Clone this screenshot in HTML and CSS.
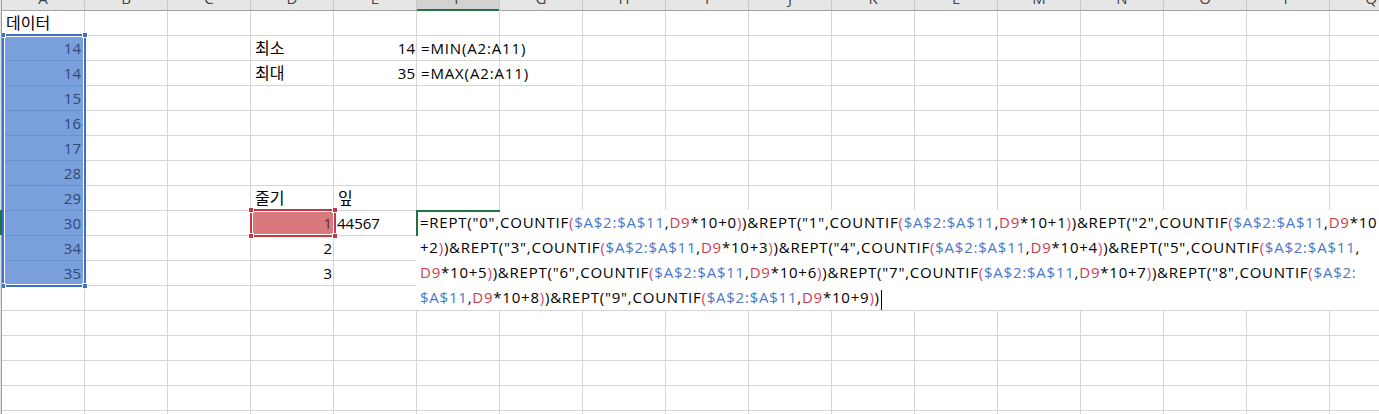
FILE: index.html
```html
<!DOCTYPE html>
<html lang="ko">
<head>
<meta charset="utf-8">
<title>Sheet</title>
<link rel="stylesheet" href="styles.css">
</head>
<body>
<div class="app">
  <div class="rowhdr">
    <div class="rh-top"></div>
    <div class="rh-sel"></div>
  </div>
  <div class="main">
    <div class="colhdr">
      <div class="ch"><span>A</span></div>
      <div class="ch"><span>B</span></div>
      <div class="ch"><span>C</span></div>
      <div class="ch"><span>D</span></div>
      <div class="ch"><span>E</span></div>
      <div class="ch cur"><span>F</span></div>
      <div class="ch"><span>G</span></div>
      <div class="ch"><span>H</span></div>
      <div class="ch"><span>I</span></div>
      <div class="ch"><span>J</span></div>
      <div class="ch"><span>K</span></div>
      <div class="ch"><span>L</span></div>
      <div class="ch"><span>M</span></div>
      <div class="ch"><span>N</span></div>
      <div class="ch"><span>O</span></div>
      <div class="ch"><span>P</span></div>
      <div class="ch"><span>Q</span></div>
    </div>
    <div class="sheet">
      <div class="cell ko ca r1">데이터</div>

      <div class="sel">
        <div class="v">14</div>
        <div class="v">14</div>
        <div class="v">15</div>
        <div class="v">16</div>
        <div class="v">17</div>
        <div class="v">28</div>
        <div class="v">29</div>
        <div class="v">30</div>
        <div class="v">34</div>
        <div class="v">35</div>
        <span class="hd hd-tl"></span>
        <span class="hd hd-tr"></span>
        <span class="hd hd-bl"></span>
        <span class="hd hd-br"></span>
      </div>

      <div class="cell ko cd r2">최소</div>
      <div class="cell num ce r2">14</div>
      <div class="cell fx cf r2">=MIN(A2:A11)</div>

      <div class="cell ko cd r3">최대</div>
      <div class="cell num ce r3">35</div>
      <div class="cell fx cf r3">=MAX(A2:A11)</div>

      <div class="cell ko cd r8">줄기</div>
      <div class="cell ko ce r8">잎</div>

      <div class="cell num ref">1
        <span class="rh rh-tl"></span>
        <span class="rh rh-tr"></span>
        <span class="rh rh-bl"></span>
        <span class="rh rh-br"></span>
      </div>
      <div class="cell ce r9">44567</div>

      <div class="cell num cd r10">2</div>
      <div class="cell num cd r11">3</div>

      <div class="editor">
        <div class="ftext">
          <div class="fl">=REPT("0",COUNTIF<span class="pp">(</span><span class="rb">$A$2:$A$11</span>,<span class="rr">D9</span>*10+0<span class="pp">)</span>)&amp;REPT("1",COUNTIF<span class="pp">(</span><span class="rb">$A$2:$A$11</span>,<span class="rr">D9</span>*10+1<span class="pp">)</span>)&amp;REPT("2",COUNTIF<span class="pp">(</span><span class="rb">$A$2:$A$11</span>,<span class="rr">D9</span>*10</div>
          <div class="fl">+2<span class="pp">)</span>)&amp;REPT("3",COUNTIF<span class="pp">(</span><span class="rb">$A$2:$A$11</span>,<span class="rr">D9</span>*10+3<span class="pp">)</span>)&amp;REPT("4",COUNTIF<span class="pp">(</span><span class="rb">$A$2:$A$11</span>,<span class="rr">D9</span>*10+4<span class="pp">)</span>)&amp;REPT("5",COUNTIF<span class="pp">(</span><span class="rb">$A$2:$A$11</span>,</div>
          <div class="fl"><span class="rr">D9</span>*10+5<span class="pp">)</span>)&amp;REPT("6",COUNTIF<span class="pp">(</span><span class="rb">$A$2:$A$11</span>,<span class="rr">D9</span>*10+6<span class="pp">)</span>)&amp;REPT("7",COUNTIF<span class="pp">(</span><span class="rb">$A$2:$A$11</span>,<span class="rr">D9</span>*10+7<span class="pp">)</span>)&amp;REPT("8",COUNTIF<span class="pp">(</span><span class="rb">$A$2:</span></div>
          <div class="fl"><span class="rb">$A$11</span>,<span class="rr">D9</span>*10+8<span class="pp">)</span>)&amp;REPT("9",COUNTIF<span class="pp">(</span><span class="rb">$A$2:$A$11</span>,<span class="rr">D9</span>*10+9<span class="pp">)</span>)<span class="caret"></span></div>
        </div>
      </div>
    </div>
  </div>
</div>
</body>
</html>
```

FILE: styles.css
```css
html, body {
  margin: 0;
  padding: 0;
  background: #ffffff;
}

body {
  overflow: hidden;
  font-family: "Open Sans", "Noto Sans CJK KR", sans-serif;
  font-size: 15px;
  color: #000000;
}

.app {
  display: flex;
  width: 1379px;
  height: 414px;
  overflow: hidden;
}

/* row header strip (cut off) */
.rowhdr {
  flex: 0 0 1px;
  background: #e1e1e1;
  border-right: 1px solid #9f9f9f;
  display: flex;
  flex-direction: column;
}

.rh-top {
  height: 210px;
}

.rh-sel {
  height: 25px;
  margin-right: -1px;
  background: #217346;
}

.main {
  flex: 1 1 auto;
  min-width: 0;
  display: flex;
  flex-direction: column;
  overflow: hidden;
}

/* column headers (top half cut off) */
.colhdr {
  flex: 0 0 auto;
  display: flex;
  align-items: flex-start;
  height: 10px;
  background: #e6e6e6;
  border-bottom: 1px solid #a3a3a3;
}

.ch {
  flex: 0 0 83px;
  box-sizing: border-box;
  height: 10px;
  border-right: 1px solid #c9c9c9;
  overflow: hidden;
  text-align: center;
  color: #444444;
}

.ch span {
  display: block;
  line-height: 20px;
  margin-top: -12px;
}

.ch.cur {
  height: 11px;
  background: #d2d2d2;
  box-shadow: inset 0 -2px 0 #217346;
}

/* the sheet grid */
.sheet {
  flex: 0 0 auto;
  display: grid;
  grid-template-columns: repeat(17, 83px);
  grid-template-rows: repeat(17, 25px);
  width: 1411px;
  background-image:
    linear-gradient(to left, #d4d4d4 1px, transparent 1px),
    linear-gradient(to top, #d4d4d4 1px, transparent 1px);
  background-size: 83px 25px;
}

.cell {
  min-width: 0;
  line-height: 25px;
  padding: 0 3px;
  white-space: nowrap;
}

.ko {
  font-size: 16px;
  padding-left: 4px;
}

.fx {
  letter-spacing: 0.85px;
  padding-left: 4px;
}

.num {
  text-align: right;
  padding-right: 2px;
}

.ca { grid-column: 1; }
.cd { grid-column: 4; }
.ce { grid-column: 5; }
.cf { grid-column: 6; }

.r1 { grid-row: 1; }
.r2 { grid-row: 2; }
.r3 { grid-row: 3; }
.r8 { grid-row: 8; }
.r9 { grid-row: 9; }
.r10 { grid-row: 10; }
.r11 { grid-row: 11; }

/* selection A2:A11 */
.sel {
  grid-column: 1;
  grid-row: 2 / 12;
  position: relative;
  display: flex;
  flex-direction: column;
  background-color: #79a0dc;
  background-image: linear-gradient(to top, #6b91cd 1px, transparent 1px);
  background-size: 100% 25px;
  color: #2f4a78;
}

.sel .v {
  height: 25px;
  line-height: 25px;
  text-align: right;
  padding-right: 4px;
}

.sel::after {
  content: "";
  position: absolute;
  top: -2px;
  left: 0;
  right: -1px;
  bottom: -1px;
  border: 2px solid #3b70cd;
  box-shadow: inset 0 0 0 1px #ffffff;
}

.hd {
  position: absolute;
  z-index: 2;
  width: 4px;
  height: 4px;
  background: #3b70cd;
  border: 1px solid #ffffff;
}

.hd-tl { left: -2px; top: -4px; }
.hd-tr { right: -3px; top: -4px; }
.hd-bl { left: -2px; bottom: -3px; }
.hd-br { right: -3px; bottom: -3px; }

/* referenced cell D9 */
.ref {
  grid-column: 4;
  grid-row: 9;
  position: relative;
  background: #d9787d;
  color: #6a2a31;
}

.ref::after {
  content: "";
  position: absolute;
  top: -2px;
  left: -1px;
  right: -2px;
  bottom: -1px;
  border: 2px solid #c53840;
  box-shadow: inset 0 0 0 1px #ffffff;
}

.rh {
  position: absolute;
  z-index: 2;
  width: 4px;
  height: 4px;
  background: #c53840;
  border: 1px solid #ffffff;
}

.rh-tl { left: -3px; top: -4px; }
.rh-tr { right: -4px; top: -4px; }
.rh-bl { left: -3px; bottom: -3px; }
.rh-br { right: -4px; bottom: -3px; }

/* in-cell editor F9 */
.editor {
  grid-column: 6 / -1;
  grid-row: 9 / 13;
  margin: -1px 0 1px -1px;
  position: relative;
  z-index: 1;
  background: #ffffff;
  padding-left: 4px;
  overflow: visible;
}

.editor::before {
  content: "";
  position: absolute;
  left: 0;
  top: 0;
  width: 84px;
  height: 2px;
  background: #217346;
}

.editor::after {
  content: "";
  position: absolute;
  left: 0;
  top: 0;
  width: 2px;
  height: 26px;
  background: #217346;
}

.ftext {
  margin-top: 0;
}

.fl {
  line-height: 25px;
  white-space: nowrap;
  letter-spacing: 0.77px;
}

.rb { color: #4a78c9; }
.rr { color: #cf3a4c; }
.pp { color: #d4466e; }

.caret {
  display: inline-block;
  width: 1px;
  height: 20px;
  margin-left: 1px;
  vertical-align: -7px;
  background: #000000;
}
```
